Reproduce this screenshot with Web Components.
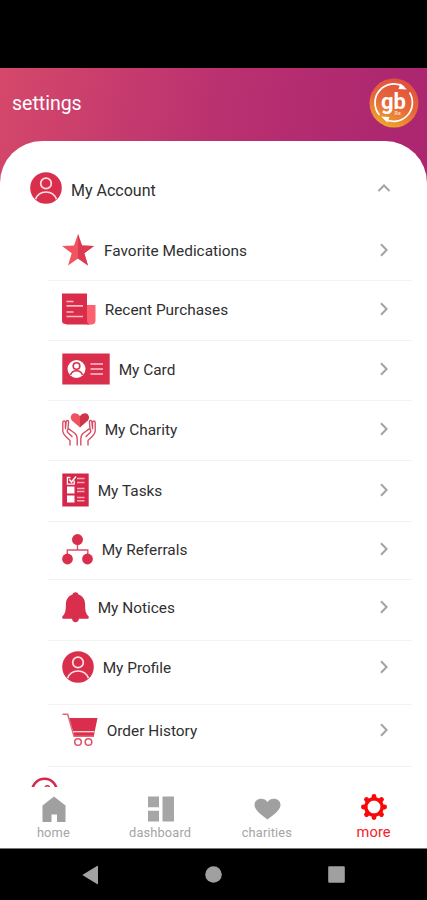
<!DOCTYPE html>
<html lang="en">
<head>
<meta charset="utf-8">
<title>settings</title>
<style>
    html, body { margin: 0; height: 100%; background: #000; }
    body { font-family: Roboto, "Liberation Sans", sans-serif; overflow: hidden; }
</style>
</head>
<body>
<settings-screen></settings-screen>

<script>
// SVG drawings by name: [width, height, content]
const ICONS = {
    person: [32, 32, `
        <circle cx="16" cy="16" r="15.8" fill="#d92f4c"/>
        <g fill="none" stroke="#ffdfe3" stroke-width="1.7">
            <circle cx="16" cy="11.4" r="5.3"/>
            <path d="M5.6 27.3C7.2 22.6 11 20 16 20s8.8 2.6 10.4 7.3"/>
        </g>`],
    star: [32, 32, `
        <path d="M16 0l4 11.6 12 .3-9.7 7.4L26 31.5 16 24.4 6 31.5l3.7-12.2L0 11.9l12-.3z" fill="#f1545f"/>
        <path d="M16 0l4 11.6 12 .3-9.7 7.4L26 31.5 16 24.4z" fill="#db3a50"/>`],
    news: [34, 32, `
        <path d="M25 12h8.5v15.5a4 4 0 0 1-4 4H25z" fill="#fb6270"/>
        <path d="M0 .5h25V31h-21.5a3.5 3.5 0 0 1-3.5-3.5z" fill="#da2d4b"/>
        <path d="M25 27.5c0 2.5 1.5 4 4 4H4v-1z" fill="#da2d4b"/>
        <path d="M4.5 8.5h7M4.5 12.8h16.5M4.5 19h7M4.5 23.5h16.5" stroke="#ffb9bf" stroke-width="1.7"/>`],
    card: [48, 32, `
        <path d="M.3.5h47.4v31H.3z" fill="#d92f4c"/>
        <circle cx="14.5" cy="16" r="9" fill="#fff"/>
        <g fill="none" stroke="#d92f4c" stroke-width="1.6">
            <circle cx="14.5" cy="13" r="3.3"/>
            <path d="M8.5 22c1-3 3-4.300 6-4.300s5 1.300 6 4.300"/>
        </g>
        <path d="M28.500 11H41M28.500 16H41M28.500 21H41" stroke="#ffc5ca" stroke-width="1.700"/>`],
    charity: [34, 33, `
        <path d="M18 14.600L9.900 7.400C7.600 4.800 8.900.5 12.700.3c2.200 0 4.200 1.100 5.300 3z" fill="#ee5361"/>
        <path d="M18 14.600l7.900-7.200C28.200 4.800 26.900.5 23 .3c-2 0-3.900 1.100-5 3z" fill="#cf3449"/>
        <g fill="none" stroke="#d64a62" stroke-width="1.350" stroke-linecap="round" stroke-linejoin="round">
            <path d="M8 32v-4.500C5 24.500 1 22 .8 18V9.500c.2-2 2.400-2 2.700 0v6.300"/>
            <path d="M3.500 14l.7-5.500c.4-1.500 2.300-1.300 2.400.3L6 15.500l6.500 4.500c2.300 1.700 2.700 4 2.700 6.500V32"/>
            <path d="M10 23.500l-4.200-4c-1.600-1.700.1-4.300 2.200-3"/>
            <path d="M26 32v-4.500c3-3 7-5.500 7.200-9.500V9.500c-.2-2-2.400-2-2.700 0v6.300"/>
            <path d="M30.500 14l-.7-5.500c-.4-1.500-2.300-1.300-2.400.3l.6 6.700-6.500 4.500c-2.300 1.700-2.700 4-2.700 6.500V32"/>
            <path d="M24 23.500l4.200-4c1.600-1.700-.1-4.300-2.200-3"/>
        </g>`],
    tasks: [27, 34, `
        <path d="M.3.500h26.400v33H.3z" fill="#d5274a"/>
        <path d="M5 13.500h7.500v7H5zM5 22.500h7.500v7H5z" fill="#fff"/>
        <path d="M12.200 7.500v3.700H5.400V4.500h3" fill="none" stroke="#fff" stroke-width="1.300"/>
        <path d="M7.300 6.500l2.200 2.500L14 3.500" fill="none" stroke="#fff" stroke-width="1.500"/>
        <path d="M15 5.600h7.500M15 9.500h7.500M15 15.500h7.500M15 18.500h7.500M15 24.500h7.500M15 27.700h7.500" stroke="#ffa9b4" stroke-width="1.500"/>`],
    tree: [31, 31, `
        <path d="M15.500 8v8M5.300 22v-6h20.500v6" fill="none" stroke="#dd5069" stroke-width="1.400"/>
        <g fill="#d92f4c"><circle cx="15.500" cy="5.600" r="5.500"/><circle cx="5.500" cy="25" r="5.400"/><circle cx="25.500" cy="25" r="5.400"/></g>`],
    bell: [27, 31, `
        <path d="M13.500.3c1.500 0 2.600.8 3 2.200 4.700 1.500 6.600 5.500 6.600 10 0 6 .7 9.500 3.300 11.500.6 1 .4 2.500-.4 2.800H17c-.4 2.300-1.500 3.400-3.500 3.400S10.400 29.100 10 26.800H1c-.8-.3-1-1.800-.4-2.800 2.600-2 3.300-5.500 3.300-11.500 0-4.500 1.900-8.500 6.600-10 .4-1.400 1.500-2.200 3-2.200z" fill="#d92f4c"/>`],
    cart: [36, 34, `
        <path d="M7.300 5h28.200l-3.700 18H12z" fill="#d92f4c"/>
        <path d="M.5 1.200h5.200L12 23.300h20" fill="none" stroke="#e2667b" stroke-width="1.500"/>
        <path d="M11 18.700h21.500" stroke="#ffd5da" stroke-width="1.300"/>
        <g fill="none" stroke="#df4f66" stroke-width="1.500"><circle cx="16" cy="29" r="3.300"/><circle cx="26.500" cy="29" r="3.300"/></g>`],
    gauge: [27, 27, `
        <circle cx="13.500" cy="14" r="12.300" fill="none" stroke="#d5274a" stroke-width="2.600"/>
        <path d="M14 10.500c.5-2.500 4.700-2.300 4.500.5" fill="none" stroke="#d5274a" stroke-width="1.300"/>`],
    right: [8, 14, `<path d="M1 1.200L6.600 7 1 12.800" fill="none" stroke="#a3a3a3" stroke-width="2"/>`],
    up: [14, 8, `<path d="M1.500 7L7 1.500 12.500 7" fill="none" stroke="#a3a3a3" stroke-width="2"/>`],
    home: [24, 26, `<path d="M12 .5L23.500 9.500V26H15v-7.500H9.500V26H.5V9.500z" fill="#a0a0a0"/>`],
    dashboard: [26, 26, `<path d="M0 .5h11v10.700H0zM0 14.700h11V25.500H0zM14.500.5H26v25H14.500z" fill="#a6a6a6"/>`],
    heart: [27, 22, `<path d="M13.500 21.500C9 18 .5 12.500.5 7 .5 3 3.500.7 7 .7c2.800 0 5.200 1.200 6.500 3.400C14.800 1.900 17.200.7 20 .7c3.500 0 6.500 2.300 6.500 6.300 0 5.500-8.500 11-13 14.500z" fill="#a0a0a0"/>`],
    gear: [26, 26, `
        <circle cx="13" cy="13" r="8.200" fill="none" stroke="#f80808" stroke-width="3.400"/>
        <g stroke="#f80808" stroke-width="4.800" stroke-linecap="round">
            <path d="M13 2.400v1.600M13 22v1.600M2.400 13H4M22 13h1.600M5.500 5.500l1 1M19.500 19.500l1 1M20.500 5.500l-1 1M6.500 19.500l-1 1"/>
        </g>`],
    back: [17, 20, `<path d="M.3 10L15 .9q1-.5 1 .5v17.200q0 1-1 .5z" fill="#a3a3a3"/>`],
    circle: [17, 17, `<circle cx="8.500" cy="8.500" r="8.300" fill="#a0a0a0"/>`],
    square: [17, 17, `<rect x=".2" y=".2" width="16.600" height="16.600" rx="1.200" fill="#a0a0a0"/>`]
};

class UiIcon extends HTMLElement {
    constructor() {
        super();
        this.attachShadow({ mode: 'open' });
    }

    connectedCallback() {
        const [w, h, content] = ICONS[this.getAttribute('name')];
        this.shadowRoot.innerHTML = `
            <style>
                :host { display: block; flex: none; }
                svg { display: block; }
            </style>
            <svg width="${w}" height="${h}" viewBox="0 0 ${w} ${h}">${content}</svg>
        `;
    }
}

class BrandLogo extends HTMLElement {
    constructor() {
        super();
        this.attachShadow({ mode: 'open' });
        this.shadowRoot.innerHTML = `
            <style>
                :host { display: block; flex: none; }
                svg { display: block; }
                text { font-family: Roboto, "Liberation Sans", sans-serif; font-weight: 700; fill: #fff; }
            </style>
            <svg width="50" height="50" viewBox="0 0 50 50">
                <defs>
                    <linearGradient id="g" x1=".7" y1="0" x2=".3" y2="1">
                        <stop offset="0" stop-color="#e04f3d"/>
                        <stop offset=".55" stop-color="#e6693a"/>
                        <stop offset="1" stop-color="#f0a928"/>
                    </linearGradient>
                </defs>
                <circle cx="25" cy="25" r="24.500" fill="url(#g)"/>
                <g fill="none" stroke="#fff" stroke-width="1.700">
                    <path d="M10.500 37A18.800 18.800 0 0 1 35 9"/>
                    <path d="M40.500 14.500A18.800 18.800 0 0 1 15.500 41"/>
                </g>
                <path d="M31.500 5.500l6.500 6-8.500-.5zM18.500 44.500l-6.500-6 8.500.5z" fill="#fff"/>
                <text x="12" y="31" font-size="22">gb<tspan x="25.500" y="36.500" font-size="5.500" fill="#ffd9c0">Rx</tspan></text>
            </svg>
        `;
    }
}

class AppHeader extends HTMLElement {
    constructor() {
        super();
        this.attachShadow({ mode: 'open' });
        this.shadowRoot.innerHTML = `
            <style>
                :host {
                    display: flex;
                    align-items: center;
                    justify-content: space-between;
                    height: 73px;
                    padding: 0 8px 0 12px;
                    color: #fff;
                    font-size: 19.5px;
                }
                .title { margin-top: -2px; }
                brand-logo { margin-top: -3px; }
            </style>
            <span class="title"><slot></slot></span>
            <brand-logo></brand-logo>
        `;
    }
}

// Top level group, its entries go in the slot
class MenuGroup extends HTMLElement {
    constructor() {
        super();
        this.attachShadow({ mode: 'open' });
    }

    connectedCallback() {
        this.shadowRoot.innerHTML = `
            <style>
                :host { display: block; }
                .head {
                    display: flex;
                    align-items: center;
                    height: 57px;
                    padding: 18px 36px 4px 30px;
                }
                .label { flex: 1; padding: 5px 0 0 9px; font-size: 16px; }
                .items { padding: 0 15px 0 48px; }
            </style>
            <div class="head">
                <ui-icon name="${this.getAttribute('icon')}"></ui-icon>
                <span class="label">${this.getAttribute('label')}</span>
                <ui-icon name="up"></ui-icon>
            </div>
            <div class="items"><slot></slot></div>
        `;
    }
}

class MenuItem extends HTMLElement {
    constructor() {
        super();
        this.attachShadow({ mode: 'open' });
    }

    connectedCallback() {
        const height = this.getAttribute('height');
        const line = this.getAttribute('line');
        this.shadowRoot.innerHTML = `
            <style>
                :host {
                    display: block;
                    box-sizing: border-box;
                    height: ${height}px;
                    border-bottom: 1px solid #f3f3f3;
                }
                .row {
                    display: flex;
                    align-items: center;
                    height: ${line}px;
                    padding: 0 24px 0 14px;
                }
                .label {
                    flex: 1;
                    padding-left: var(--gap, 8.7px);
                    font-size: 15.4px;
                    line-height: 20px;
                    margin-top: 2px;
                }
            </style>
            <div class="row">
                <ui-icon name="${this.getAttribute('icon')}"></ui-icon>
                <span class="label"><slot></slot></span>
                <ui-icon name="right"></ui-icon>
            </div>
        `;
    }
}

class TabItem extends HTMLElement {
    constructor() {
        super();
        this.attachShadow({ mode: 'open' });
    }

    connectedCallback() {
        this.shadowRoot.innerHTML = `
            <style>
                :host {
                    display: flex;
                    flex-direction: column;
                    align-items: center;
                    color: #a5a5a5;
                    font-size: 12.8px;
                    letter-spacing: .15px;
                }
                :host([active]) { color: #f5202a; font-size: 14.6px; }
                .icon {
                    display: flex;
                    align-items: center;
                    height: 26px;
                    margin-top: 9px;
                    padding-left: 2px;
                }
                :host([active]) .icon { margin-top: 7px; padding-left: 0; }
                .label { line-height: 16px; margin-top: 3px; }
                :host([active]) .label { margin-top: 4px; }
            </style>
            <div class="icon"><ui-icon name="${this.getAttribute('icon')}"></ui-icon></div>
            <span class="label"><slot></slot></span>
        `;
    }
}

class TabBar extends HTMLElement {
    constructor() {
        super();
        this.attachShadow({ mode: 'open' });
        this.shadowRoot.innerHTML = `
            <style>
                :host {
                    display: grid;
                    grid-template-columns: repeat(4, 1fr);
                    height: 61px;
                    background: #fff;
                    border-bottom: 1px solid #777;
                }
            </style>
            <slot></slot>
        `;
    }
}

class SystemBar extends HTMLElement {
    constructor() {
        super();
        this.attachShadow({ mode: 'open' });
        this.shadowRoot.innerHTML = `
            <style>
                :host {
                    display: flex;
                    align-items: center;
                    justify-content: space-between;
                    height: 51px;
                    padding: 0 82px;
                    background: #000;
                }
            </style>
            <ui-icon name="back"></ui-icon>
            <ui-icon name="circle"></ui-icon>
            <ui-icon name="square"></ui-icon>
        `;
    }
}

class SettingsScreen extends HTMLElement {
    constructor() {
        super();
        this.attachShadow({ mode: 'open' });
        this.shadowRoot.innerHTML = `
            <style>
                :host {
                    display: flex;
                    flex-direction: column;
                    box-sizing: border-box;
                    width: 427px;
                    height: 900px;
                    padding-top: 68px;
                    color: #2f2f2f;
                }
                .app {
                    flex: 1;
                    min-height: 0;
                    display: flex;
                    flex-direction: column;
                    background: linear-gradient(100deg, #d5486a 0%, #ba3170 50%, #ae2870 85%, #ab2670 100%) 0 0 / 100% 125px no-repeat #fff;
                }
                .sheet {
                    flex: 1;
                    min-height: 0;
                    overflow: hidden;
                    background: #fff;
                    border-radius: 42px 42px 0 0;
                }
                .wide { --gap: 10px; }
                .next { padding: 10px 0 0 31px; }
            </style>
            <div class="app">
                <app-header>settings</app-header>
                <div class="sheet">
                    <menu-group icon="person" label="My Account">
                        <menu-item class="wide" icon="star" height="61" line="59">Favorite Medications</menu-item>
                        <menu-item icon="news" height="60" line="56">Recent Purchases</menu-item>
                        <menu-item icon="card" height="60" line="55">My Card</menu-item>
                        <menu-item icon="charity" height="60" line="56">My Charity</menu-item>
                        <menu-item icon="tasks" height="61" line="57">My Tasks</menu-item>
                        <menu-item icon="tree" height="58" line="54">My Referrals</menu-item>
                        <menu-item icon="bell" height="61" line="54">My Notices</menu-item>
                        <menu-item icon="person" height="64" line="52">My Profile</menu-item>
                        <menu-item icon="cart" height="62" line="50">Order History</menu-item>
                    </menu-group>
                    <div class="next"><ui-icon name="gauge"></ui-icon></div>
                </div>
                <tab-bar>
                    <tab-item icon="home">home</tab-item>
                    <tab-item icon="dashboard">dashboard</tab-item>
                    <tab-item icon="heart">charities</tab-item>
                    <tab-item icon="gear" active>more</tab-item>
                </tab-bar>
            </div>
            <system-bar></system-bar>
        `;
    }
}

customElements.define('ui-icon', UiIcon);
customElements.define('brand-logo', BrandLogo);
customElements.define('app-header', AppHeader);
customElements.define('menu-item', MenuItem);
customElements.define('menu-group', MenuGroup);
customElements.define('tab-item', TabItem);
customElements.define('tab-bar', TabBar);
customElements.define('system-bar', SystemBar);
customElements.define('settings-screen', SettingsScreen);
</script>
</body>
</html>
